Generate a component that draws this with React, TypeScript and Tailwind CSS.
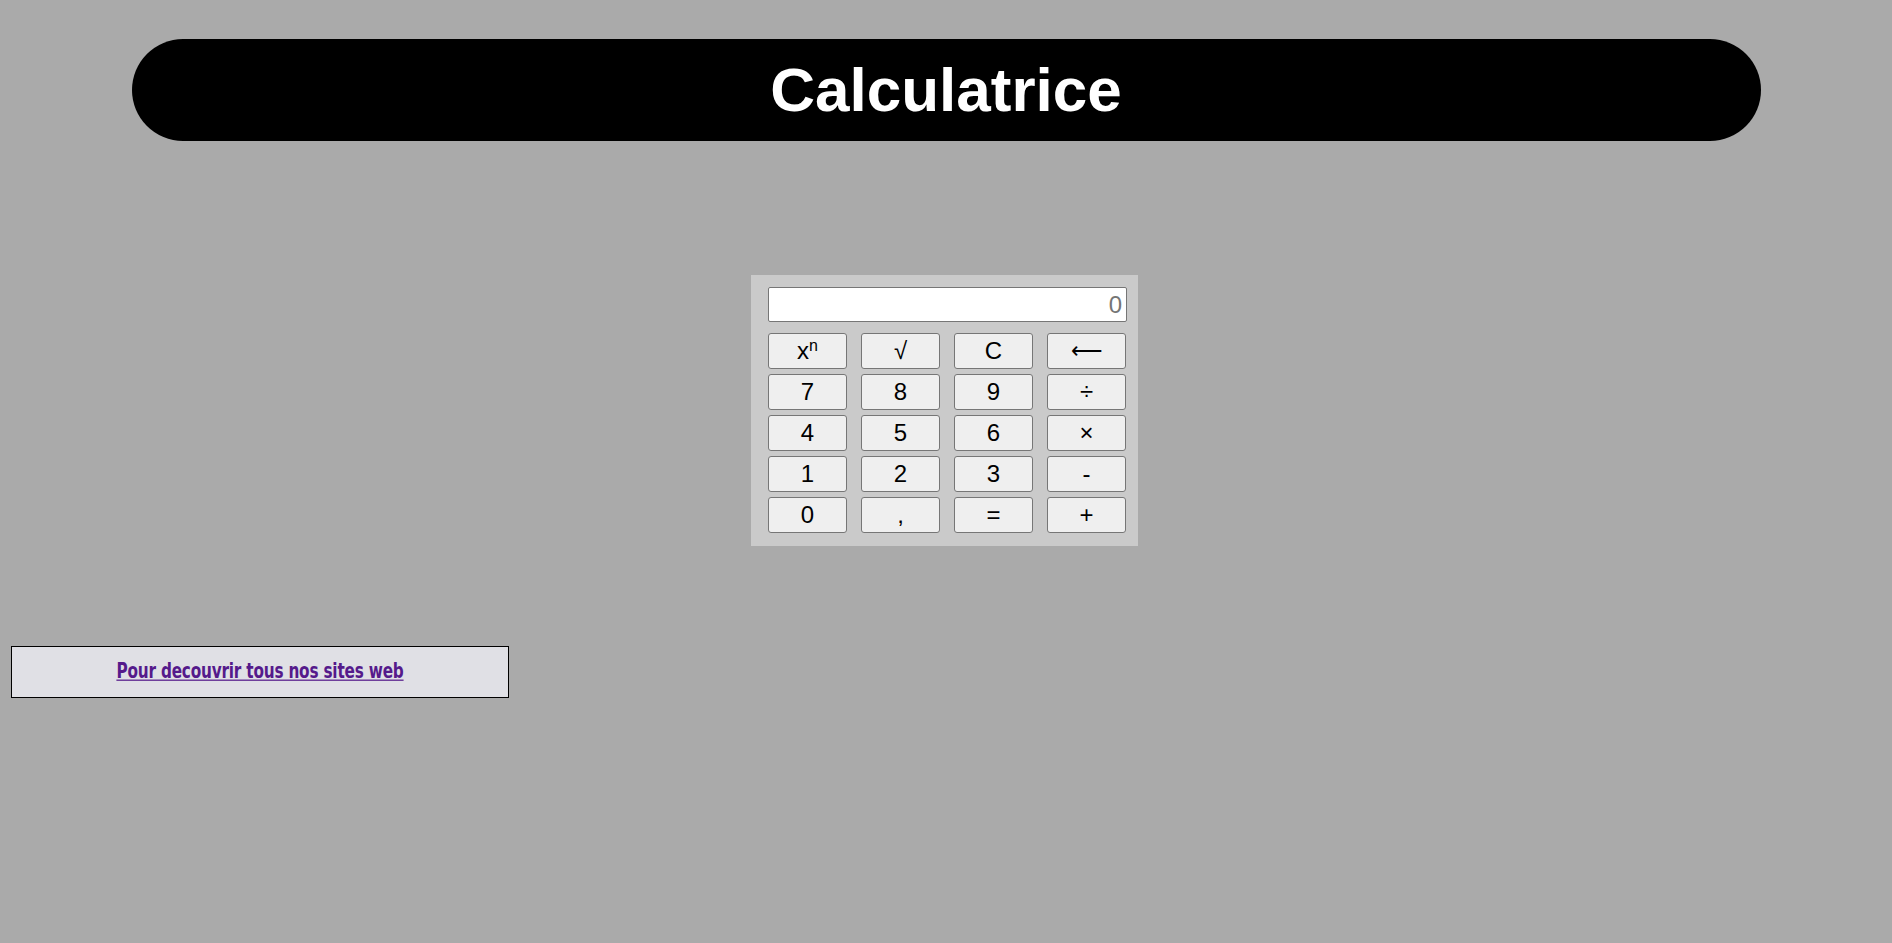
import React, { useState } from 'react';

const keys = ['xⁿ', '√', 'C', '←', '7', '8', '9', '÷', '4', '5', '6', '×', '1', '2', '3', '-', '0', ',', '=', '+'];

export default function App() {
  const [display, setDisplay] = useState('');

  const press = (k: string) => {
    if (k === 'C') return setDisplay('');
    if (k === '←') return setDisplay(display.slice(0, -1));
    if (k === '=') {
      try {
        const expr = display.replace(/×/g, '*').replace(/÷/g, '/').replace(/,/g, '.');
        const r = Function(`return (${expr})`)();
        setDisplay(String(r).replace('.', ','));
      } catch {
        setDisplay('');
      }
      return;
    }
    if (k === '√') {
      const v = parseFloat(display.replace(',', '.'));
      if (!isNaN(v)) setDisplay(String(Math.sqrt(v)).replace('.', ','));
      return;
    }
    if (k === 'xⁿ') return setDisplay(display + '**');
    setDisplay(display + k);
  };

  const label = (k: string) => {
    if (k === 'xⁿ')
      return (
        <span>
          x<sup className="text-[16px]">n</sup>
        </span>
      );
    if (k === '←') return <span className="font-['DejaVu_Sans',sans-serif] text-[22px] font-light">⟵</span>;
    return k;
  };

  return (
    <div className="min-h-[943px] bg-[#aaaaaa] pt-[39px] font-['Liberation_Sans',Arial,sans-serif]">
      <header className="mx-auto flex h-[102px] w-[1629px] items-center justify-center rounded-full bg-black">
        <h1 className="text-[62px] font-bold leading-none text-white">Calculatrice</h1>
      </header>

      <div className="mt-[134px] flex justify-center">
        <div className="mr-[3px] w-[387px] bg-[#cacaca] pt-[12px] pb-[13px] pl-[17px] pr-[11px]">
          <input
            readOnly
            value={display}
            placeholder="0"
            className="mb-[11px] h-[35px] w-[359px] rounded-[2px] border border-[#767676] bg-white px-[4px] text-right text-[24px] text-black placeholder:text-[#757575] outline-none"
          />
          <div className="grid grid-cols-[79px_79px_79px_79px] gap-x-[14px] gap-y-[5px]">
            {keys.map((k) => (
              <button
                key={k}
                onClick={() => press(k)}
                className="flex h-[36px] items-center justify-center rounded-[3px] border border-[#767676] bg-[#efefef] text-[24px] leading-none text-black"
              >
                {label(k)}
              </button>
            ))}
          </div>
        </div>
      </div>

      <div className="mt-[100px] ml-[11px] flex h-[52px] w-[498px] items-center justify-center border border-black bg-[#e0e0e5]">
        <a
          href="#"
          className="inline-block scale-y-[1.25] font-['DejaVu_Sans_Condensed','DejaVu_Sans',sans-serif] text-[17px] font-bold tracking-[-0.2px] text-[#551a8b] underline"
        >
          Pour decouvrir tous nos sites web
        </a>
      </div>
    </div>
  );
}
